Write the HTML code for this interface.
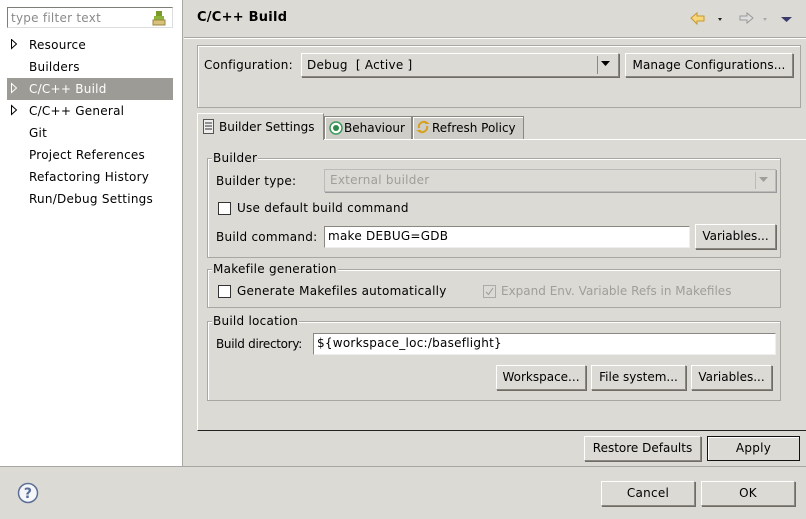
<!DOCTYPE html><html><head><style>
*{box-sizing:border-box;margin:0;padding:0}
body{width:806px;height:519px;background:#dcdad5;font-family:"DejaVu Sans","Liberation Sans",sans-serif;font-size:12px;color:#000;position:relative;overflow:hidden;letter-spacing:0.25px}
.a{position:absolute}
.t{position:absolute;white-space:nowrap;line-height:14px}
.btn{position:absolute;border:1px solid #8a8780;border-top-color:#fff;border-left-color:#fff;box-shadow:1px 1px 0 #6f6c66;background:#dcdad5;text-align:center;line-height:22px;white-space:nowrap}
.grp{position:absolute;border:1px solid #a9a7a2;box-shadow:inset 1px 1px 0 #fff}
.inp{position:absolute;background:#fff;border:1px solid #8a8780;border-right-color:#eee;border-bottom-color:#eee;padding-left:3px;line-height:19px;white-space:nowrap}
.cb{position:absolute;width:13px;height:13px;border:1px solid #333;background:#fff}
.gt{position:absolute;background:#dcdad5;padding:0 1px;line-height:14px;white-space:nowrap}
</style></head><body>
<div class="a" style="left:0;top:0;width:183px;height:466px;background:#fff;border-right:1px solid #a9a7a2"></div>
<div class="a" style="left:0;top:466px;width:806px;height:1px;background:#a9a7a2"></div>
<div class="a" style="left:7px;top:7px;width:166px;height:21px;border:1px solid #7f7d78;border-right-color:#ddd;border-bottom-color:#ddd;background:#fff"></div>
<div class="t" style="left:11px;top:11px;color:#8a8a8a">type filter text</div>
<svg class="a" style="left:152px;top:10px" width="14" height="16"><rect x="4" y="1" width="6" height="5" fill="#7a9a2a"/><rect x="2" y="6" width="10" height="4" fill="#8db33a"/><rect x="1" y="10" width="12" height="5" fill="#d8c27a" stroke="#9a8540"/></svg>
<div class="a" style="left:7px;top:78px;width:166px;height:22px;background:#9d9b95"></div>
<svg class="a" style="left:10px;top:39px" width="8" height="160"><path d="M1.5 0.5v9l5-4.5z" fill="#fff" stroke="#000"/><path d="M1.5 44.5v9l5-4.5z" fill="none" stroke="#fff"/><path d="M1.5 66.5v9l5-4.5z" fill="#fff" stroke="#000"/></svg>
<div class="t" style="left:29px;top:38px">Resource</div>
<div class="t" style="left:29px;top:60px">Builders</div>
<div class="t" style="left:29px;top:82px;color:#fff">C/C++ Build</div>
<div class="t" style="left:29px;top:104px">C/C++ General</div>
<div class="t" style="left:29px;top:126px">Git</div>
<div class="t" style="left:29px;top:148px">Project References</div>
<div class="t" style="left:29px;top:170px">Refactoring History</div>
<div class="t" style="left:29px;top:192px">Run/Debug Settings</div>
<svg class="a" style="left:17px;top:482px" width="22" height="22"><circle cx="11" cy="11" r="9.5" fill="#f4f6fa" stroke="#5a6e96" stroke-width="1.5"/><text x="11" y="16" text-anchor="middle" font-family="DejaVu Sans" font-weight="bold" font-size="14" fill="#5a6e96">?</text></svg>

<div class="t" style="left:197px;top:10px;font-weight:bold;font-size:13px;line-height:16px">C/C++ Build</div>
<svg class="a" style="left:690px;top:11px" width="106" height="16"><path d="M1 7l6-5v3h7v5H7v3z" fill="#f8d77a" stroke="#c49a30"/><path d="M28 7l4 0-2 3z" fill="#222"/><path d="M50 5h7V2l6 5-6 5V9h-7z" fill="#ddd" stroke="#999"/><path d="M73 7l4 0-2 3z" fill="#aaa"/><path d="M91 6h11l-5.5 5z" fill="#3b3b6b"/></svg>
<div class="a" style="left:184px;top:37px;width:622px;height:1px;background:#a9a7a2"></div>
<div class="a" style="left:184px;top:38px;width:622px;height:1px;background:#fff"></div>

<div class="grp" style="left:197px;top:45px;width:604px;height:63px"></div>
<div class="t" style="left:204px;top:58px">Configuration:</div>
<div class="btn" style="left:301px;top:53px;width:318px;height:24px;text-align:left;padding-left:5px">Debug&nbsp;&nbsp;[ Active ]</div>
<div class="a" style="left:597px;top:56px;width:1px;height:18px;background:#888"></div>
<svg class="a" style="left:601px;top:60px" width="10" height="8"><path d="M0 1h9l-4.5 5z" fill="#000"/></svg>
<div class="btn" style="left:625px;top:53px;width:168px;height:24px;letter-spacing:0.1px">Manage Configurations...</div>

<div class="a" style="left:197px;top:139px;width:609px;height:292px;border:1px solid #fff;border-right:0;border-bottom:1px solid #222"></div>
<div class="a" style="left:324px;top:116px;width:88px;height:23px;border:1px solid #8a8780;border-bottom:0;background:#cfcdc7;box-shadow:inset 1px 1px 0 #fff"></div>
<div class="a" style="left:412px;top:116px;width:112px;height:23px;border:1px solid #8a8780;border-bottom:0;background:#cfcdc7;box-shadow:inset 1px 1px 0 #fff"></div>
<div class="a" style="left:197px;top:113px;width:127px;height:27px;border:1px solid #fff;border-right-color:#8a8780;border-bottom:0;background:#dcdad5"></div>
<svg class="a" style="left:203px;top:119px" width="12" height="16"><rect x="0.5" y="0.5" width="10" height="14" fill="#eee" stroke="#555"/><path d="M2 4h7M2 7h7M2 10h7" stroke="#333"/></svg>
<div class="t" style="left:219px;top:120px;letter-spacing:0">Builder Settings</div>
<svg class="a" style="left:329px;top:121px" width="14" height="14"><circle cx="7" cy="7" r="6" fill="#fff" stroke="#3a9a5a" stroke-width="1.5"/><circle cx="7" cy="7" r="3" fill="#2f8a4a"/></svg>
<div class="t" style="left:344px;top:121px;letter-spacing:0">Behaviour</div>
<svg class="a" style="left:416px;top:119px" width="14" height="16"><path d="M3 9a5 5 0 0 1 8-5l-2 0M11 7a5 5 0 0 1-8 5l2 0" fill="none" stroke="#d6a020" stroke-width="2"/></svg>
<div class="t" style="left:432px;top:121px;letter-spacing:0">Refresh Policy</div>

<div class="grp" style="left:207px;top:158px;width:574px;height:100px"></div>
<div class="gt" style="left:212px;top:151px">Builder</div>
<div class="t" style="left:216px;top:174px">Builder type:</div>
<div class="btn" style="left:324px;top:169px;width:452px;height:23px;text-align:left;padding-left:5px;color:#a09e98;border-color:#bbb;box-shadow:1px 1px 0 #999;line-height:21px">External builder</div>
<div class="a" style="left:755px;top:172px;width:1px;height:17px;background:#bbb"></div>
<svg class="a" style="left:759px;top:177px" width="10" height="8"><path d="M0 0h9l-4.5 5z" fill="#a09e98"/></svg>
<div class="cb" style="left:218px;top:202px"></div>
<div class="t" style="left:237px;top:201px">Use default build command</div>
<div class="t" style="left:216px;top:230px">Build command:</div>
<div class="inp" style="left:324px;top:226px;width:366px;height:22px">make DEBUG=GDB</div>
<div class="btn" style="left:695px;top:224px;width:81px;height:25px;letter-spacing:0">Variables...</div>

<div class="grp" style="left:207px;top:269px;width:574px;height:39px"></div>
<div class="gt" style="left:212px;top:262px">Makefile generation</div>
<div class="cb" style="left:218px;top:285px"></div>
<div class="t" style="left:237px;top:284px">Generate Makefiles automatically</div>
<div class="cb" style="left:483px;top:285px;border-color:#aaa;background:#dcdad5"></div>
<svg class="a" style="left:484px;top:286px" width="11" height="11"><path d="M2 6l2.5 2.5L9 2" fill="none" stroke="#999"/></svg>
<div class="t" style="left:501px;top:284px;color:#a09e98;letter-spacing:0">Expand Env. Variable Refs in Makefiles</div>

<div class="grp" style="left:207px;top:321px;width:574px;height:80px"></div>
<div class="gt" style="left:212px;top:314px">Build location</div>
<div class="t" style="left:216px;top:337px;letter-spacing:-0.3px">Build directory:</div>
<div class="inp" style="left:313px;top:333px;width:463px;height:22px">${workspace_loc:/baseflight}</div>
<div class="btn" style="left:496px;top:365px;width:90px;height:25px;letter-spacing:0">Workspace...</div>
<div class="btn" style="left:591px;top:365px;width:95px;height:25px;letter-spacing:0">File system...</div>
<div class="btn" style="left:691px;top:365px;width:81px;height:25px;letter-spacing:0">Variables...</div>

<div class="btn" style="left:584px;top:436px;width:117px;height:25px;letter-spacing:0">Restore Defaults</div>
<div class="btn" style="left:707px;top:436px;width:93px;height:25px;border:1px solid #111;box-shadow:inset 1px 1px 0 #fff">Apply</div>
<div class="btn" style="left:601px;top:481px;width:94px;height:25px">Cancel</div>
<div class="btn" style="left:701px;top:481px;width:94px;height:25px">OK</div>
</body></html>
